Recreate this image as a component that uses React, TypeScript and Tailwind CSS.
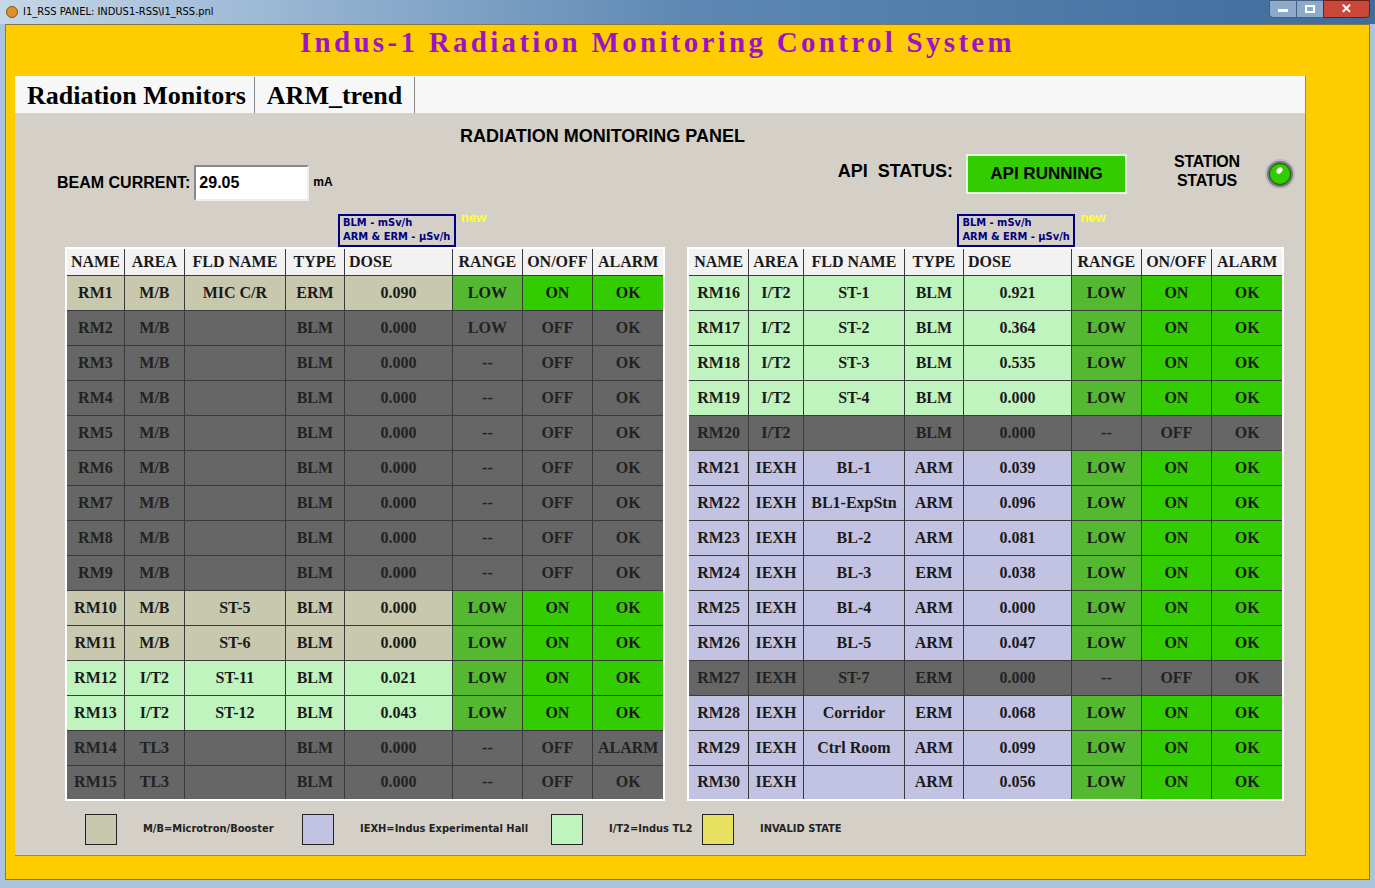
const MB = "bg-[#c8c8ae]";
const IEXH = "bg-[#c2c2e2]";
const IT2 = "bg-[#c0f4bf]";
const OFFC = "bg-[#666666]";
const LOWC = "bg-[#54b931]";
const ONC = "bg-[#33cc00]";

const SERIF = "font-[family-name:Liberation_Serif,serif]";
const SANS = "font-[family-name:Liberation_Sans,Arial,sans-serif]";
const TAHOMA = "font-[family-name:DejaVu_Sans_Condensed,DejaVu_Sans,sans-serif]";

type Row = [string, string, string, string, string, boolean];

const left: Row[] = [
  ["RM1", "M/B", "MIC C/R", "ERM", "0.090", true],
  ["RM2", "M/B", "", "BLM", "0.000", false],
  ["RM3", "M/B", "", "BLM", "0.000", false],
  ["RM4", "M/B", "", "BLM", "0.000", false],
  ["RM5", "M/B", "", "BLM", "0.000", false],
  ["RM6", "M/B", "", "BLM", "0.000", false],
  ["RM7", "M/B", "", "BLM", "0.000", false],
  ["RM8", "M/B", "", "BLM", "0.000", false],
  ["RM9", "M/B", "", "BLM", "0.000", false],
  ["RM10", "M/B", "ST-5", "BLM", "0.000", true],
  ["RM11", "M/B", "ST-6", "BLM", "0.000", true],
  ["RM12", "I/T2", "ST-11", "BLM", "0.021", true],
  ["RM13", "I/T2", "ST-12", "BLM", "0.043", true],
  ["RM14", "TL3", "", "BLM", "0.000", false],
  ["RM15", "TL3", "", "BLM", "0.000", false],
];

const right: Row[] = [
  ["RM16", "I/T2", "ST-1", "BLM", "0.921", true],
  ["RM17", "I/T2", "ST-2", "BLM", "0.364", true],
  ["RM18", "I/T2", "ST-3", "BLM", "0.535", true],
  ["RM19", "I/T2", "ST-4", "BLM", "0.000", true],
  ["RM20", "I/T2", "", "BLM", "0.000", false],
  ["RM21", "IEXH", "BL-1", "ARM", "0.039", true],
  ["RM22", "IEXH", "BL1-ExpStn", "ARM", "0.096", true],
  ["RM23", "IEXH", "BL-2", "ARM", "0.081", true],
  ["RM24", "IEXH", "BL-3", "ERM", "0.038", true],
  ["RM25", "IEXH", "BL-4", "ARM", "0.000", true],
  ["RM26", "IEXH", "BL-5", "ARM", "0.047", true],
  ["RM27", "IEXH", "ST-7", "ERM", "0.000", false],
  ["RM28", "IEXH", "Corridor", "ERM", "0.068", true],
  ["RM29", "IEXH", "Ctrl Room", "ARM", "0.099", true],
  ["RM30", "IEXH", "", "ARM", "0.056", true],
];

const headers = ["NAME", "AREA", "FLD NAME", "TYPE", "DOSE", "RANGE", "ON/OFF", "ALARM"];

function areaBg(a: string) {
  if (a === "I/T2") return IT2;
  if (a === "IEXH") return IEXH;
  return MB;
}

function Table({ rows, widths }: { rows: Row[]; widths: number[] }) {
  const td = "border border-[#3a3a3a] text-center h-[35px] p-0";
  return (
    <table className={`border-collapse border-2 border-white table-fixed ${SERIF} font-bold text-[16px] text-[#1a1a1a]`}>
      <colgroup>
        {widths.map((w, i) => (
          <col key={i} style={{ width: w }} />
        ))}
      </colgroup>
      <thead>
        <tr>
          {headers.map((h) => (
            <th key={h} className={`border border-[#3a3a3a] bg-[#f2f2f2] h-[27px] px-1 whitespace-nowrap ${h === "DOSE" ? "text-left" : "text-center"}`}>
              {h}
            </th>
          ))}
        </tr>
      </thead>
      <tbody>
        {rows.map((r) => {
          const bg = r[5] ? areaBg(r[1]) : OFFC;
          const txt = r[5] ? "" : "text-[#222]";
          return (
            <tr key={r[0]} className={txt}>
              <td className={`${td} ${bg}`}>{r[0]}</td>
              <td className={`${td} ${bg}`}>{r[1]}</td>
              <td className={`${td} ${bg} whitespace-nowrap`}>{r[2]}</td>
              <td className={`${td} ${bg}`}>{r[3]}</td>
              <td className={`${td} ${bg}`}>{r[4]}</td>
              <td className={`${td} ${r[5] ? LOWC : OFFC}`}>
                {r[5] || r[0] === "RM2" ? "LOW" : "--"}
              </td>
              <td className={`${td} ${r[5] ? ONC : OFFC}`}>{r[5] ? "ON" : "OFF"}</td>
              <td className={`${td} ${r[5] ? ONC : OFFC}`}>{r[0] === "RM14" ? "ALARM" : "OK"}</td>
            </tr>
          );
        })}
      </tbody>
    </table>
  );
}

function UnitBox() {
  return (
    <div className="flex items-start gap-[5px] h-[33px]">
      <div className={`border-2 border-[#000080] bg-[#d4d0c8] text-[#000080] text-[11px] font-bold leading-[14px] px-[3px] w-[118px] h-[33px] ${TAHOMA}`}>
        <div>BLM - mSv/h</div>
        <div>ARM &amp; ERM - µSv/h</div>
      </div>
      <span className={`text-[#ffff33] text-[13px] font-bold ${SANS} leading-none mt-[-3px]`}>new</span>
    </div>
  );
}

function Legend({ color, label }: { color: string; label: string }) {
  return (
    <div className="flex items-center gap-[26px]">
      <div className={`w-[32px] h-[31px] border border-[#222] ${color}`} />
      <span className={`text-[11px] font-bold text-[#222] ${TAHOMA}`}>{label}</span>
    </div>
  );
}

export default function App() {
  return (
    <div className={`w-[1375px] h-[888px] bg-[#a9c4dc] ${SANS} overflow-hidden`}>
      <div className="h-[24px] flex items-center justify-between pl-[6px] bg-gradient-to-r from-[#c5d7e8] via-[#5d88b4] to-[#3e6d9c]">
        <div className={`flex items-center gap-[5px] text-[11px] text-black ${TAHOMA}`}>
          <span className="w-[12px] h-[12px] rounded-full bg-[#e0902a] border border-[#7a5a10]" />
          I1_RSS PANEL: INDUS1-RSS\I1_RSS.pnl
        </div>
        <div className="flex self-start mr-[5px]">
          <div className="w-[28px] h-[18px] bg-[#8eaacb] border border-[#45607f] rounded-bl-[4px] flex items-end justify-center pb-[5px]"><div className="w-[10px] h-[3px] bg-white" /></div>
          <div className="w-[26px] h-[18px] bg-[#8eaacb] border-y border-[#45607f] flex items-center justify-center"><div className="w-[10px] h-[8px] border-2 border-white" /></div>
          <div className="w-[47px] h-[18px] bg-[#c9463a] border border-[#6b1d16] rounded-br-[4px] flex items-center justify-center text-white font-bold text-[13px]">✕</div>
        </div>
      </div>
      <div className="mx-[5px] h-[856px] bg-[#ffcc00] border border-[#8c7a3a] flex flex-col">
        <div className="h-[51px] flex justify-center pt-[0px] pr-[60px]">
          <h1 className={`text-[#9b14c4] ${SERIF} font-bold text-[29px] tracking-[3.3px] leading-[34px]`}>
            Indus-1 Radiation Monitoring Control System
          </h1>
        </div>
        <div className="ml-[9px] w-[1291px] h-[780px] bg-[#d4d0c8] flex flex-col border-r border-b border-[#888]">
          <div className="h-[37px] bg-[#f7f7f7] flex items-end pl-[4px]">
            <div className={`px-[8px] h-[36px] flex items-center text-[26px] ${SERIF} font-bold text-black border-r border-[#888] bg-[#f7f7f7]`}>
              Radiation Monitors
            </div>
            <div className={`px-[12px] h-[36px] flex items-center text-[26px] ${SERIF} font-bold text-black border-r border-[#888]`}>
              ARM_trend
            </div>
          </div>
          <div className="relative flex flex-col">
            <div className="text-center text-[18px] font-bold text-black pt-[12px] pr-[115px] leading-[22px]">
              RADIATION MONITORING PANEL
            </div>
            <div className="flex items-start h-[67px]">
              <div className="flex items-center ml-[42px] mt-[18px]">
                <span className="text-[16px] font-bold text-black mr-[4px]">BEAM CURRENT:</span>
                <div className="w-[115px] h-[36px] bg-white border-2 border-t-[#888] border-l-[#888] border-r-[#eee] border-b-[#eee] flex items-center px-[3px] text-[16px] font-bold">
                  29.05
                </div>
                <span className="text-[12px] font-bold ml-[4px] -mt-[2px]">mA</span>
              </div>
              <div className="flex items-center ml-[505px] mt-[7px]">
                <span className="text-[18px] font-bold text-black mr-[13px] -mt-[6px]">API&nbsp; STATUS:</span>
                <div className="w-[161px] h-[40px] bg-[#33cc00] border-2 border-[#e8f8e0] flex items-center justify-center text-[17px] font-bold text-black">
                  API RUNNING
                </div>
                <div className="ml-[47px] text-[16px] font-bold leading-[19px] text-center text-black tracking-[-0.3px] -mt-[6px]">
                  STATION<br />STATUS
                </div>
                <div className="ml-[25px] w-[30px] h-[30px] rounded-full bg-[#777] border-2 border-[#bbb] flex items-center justify-center">
                  <div className="w-[22px] h-[22px] rounded-full bg-[#33cc00] border border-[#155a00] relative">
                    <div className="absolute left-[6px] top-[4px] w-[7px] h-[5px] rounded-full bg-white -rotate-45" />
                  </div>
                </div>
              </div>
            </div>
            <div className="flex gap-[22px] ml-[50px]">
              <div className="flex flex-col">
                <div className="ml-[273px]"><UnitBox /></div>
                <Table rows={left} widths={[56, 60, 101, 59, 108, 70, 70, 72]} />
              </div>
              <div className="flex flex-col">
                <div className="ml-[270px]"><UnitBox /></div>
                <Table rows={right} widths={[60, 55, 101, 59, 108, 70, 70, 72]} />
              </div>
            </div>
            <div className="flex items-center ml-[70px] mt-[13px]">
              <div className="w-[217px]"><Legend color={MB} label="M/B=Microtron/Booster" /></div>
              <div className="w-[249px]"><Legend color={IEXH} label="IEXH=Indus Experimental Hall" /></div>
              <div className="w-[151px]"><Legend color={IT2} label="I/T2=Indus TL2" /></div>
              <Legend color="bg-[#e8e060]" label="INVALID STATE" />
            </div>
          </div>
        </div>
      </div>
    </div>
  );
}
